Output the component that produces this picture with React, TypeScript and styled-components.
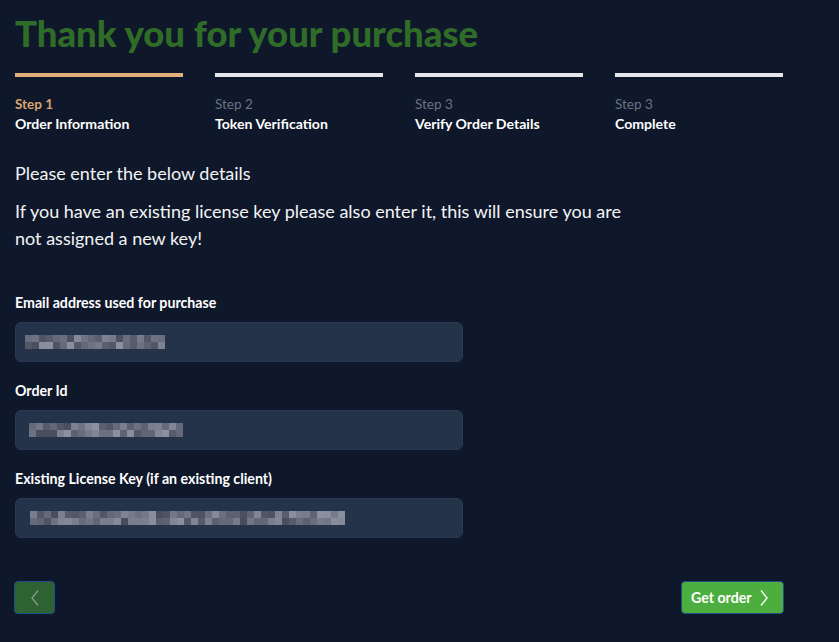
import styled, { createGlobalStyle } from 'styled-components';

const GlobalStyle = createGlobalStyle`
  html, body {
    margin: 0;
    padding: 0;
    background: #0f172a;
  }
  body {
    font-family: Lato, 'Open Sans', sans-serif;
    color: #ffffff;
  }
`;

const steps = [
  { step: 'Step 1', title: 'Order Information', active: true },
  { step: 'Step 2', title: 'Token Verification', active: false },
  { step: 'Step 3', title: 'Verify Order Details', active: false },
  { step: 'Step 3', title: 'Complete', active: false },
];

// grey levels for the pixelated (redacted) field values, two rows each
const mosaic = (seed: number, cols: number) => {
  const rows: number[][] = [[], []];
  let s = seed;
  for (let r = 0; r < 2; r++) {
    for (let c = 0; c < cols; c++) {
      s = (s * 9301 + 49297) % 233280;
      rows[r].push(s / 233280);
    }
  }
  return rows;
};

const Redacted = ({ seed, cols }: { seed: number; cols: number }) => {
  const rows = mosaic(seed, cols);
  const w = 7;
  return (
    <svg width={cols * w} height={14} viewBox={`0 0 ${cols * w} 14`}>
      {rows.map((row, r) =>
        row.map((v, c) => {
          const g = Math.round(70 + v * 70);
          return (
            <rect
              key={`${r}-${c}`}
              x={c * w}
              y={r * 7}
              width={w}
              height={7}
              fill={`rgb(${g}, ${g + 6}, ${g + 22})`}
            />
          );
        })
      )}
    </svg>
  );
};

const ChevronLeft = () => (
  <svg width="10" height="18" viewBox="0 0 10 18" fill="none">
    <path d="M8 1.5 L2 9 L8 16.5" stroke="#8a9a8c" strokeWidth="1.3" />
  </svg>
);

const ChevronRight = () => (
  <svg width="10" height="18" viewBox="0 0 10 18" fill="none">
    <path d="M2 1.5 L8 9 L2 16.5" stroke="#ffffff" strokeWidth="1.4" />
  </svg>
);

export default function App() {
  return (
    <>
      <GlobalStyle />
      <Page>
        <Title>Thank you for your purchase</Title>

        <Steps>
          {steps.map((s, i) => (
            <StepItem key={i}>
              <StepBar $active={s.active} />
              <StepLabel $active={s.active}>{s.step}</StepLabel>
              <StepTitle>{s.title}</StepTitle>
            </StepItem>
          ))}
        </Steps>

        <Intro>
          <Lead>Please enter the below details</Lead>
          <Lead>
            If you have an existing license key please also enter it, this will ensure you are
            not assigned a new key!
          </Lead>
        </Intro>

        <Form>
          <Field>
            <Label>Email address used for purchase</Label>
            <InputBox $pad={9}>
              <Redacted seed={7} cols={20} />
            </InputBox>
          </Field>
          <Field>
            <Label>Order Id</Label>
            <InputBox $pad={13}>
              <Redacted seed={31} cols={22} />
            </InputBox>
          </Field>
          <Field>
            <Label>Existing License Key (if an existing client)</Label>
            <InputBox $pad={14}>
              <Redacted seed={113} cols={45} />
            </InputBox>
          </Field>
        </Form>

        <Footer>
          <BackButton type="button" aria-label="Back">
            <ChevronLeft />
          </BackButton>
          <NextButton type="button">
            Get order
            <ChevronRight />
          </NextButton>
        </Footer>
      </Page>
    </>
  );
}

const Page = styled.div`
  width: 839px;
  height: 642px;
  box-sizing: border-box;
  padding: 10px 15px 0 15px;
  background: #0f172a;
  overflow: hidden;
`;

const Title = styled.h1`
  margin: 0;
  font-size: 36.5px;
  line-height: 46px;
  font-weight: 900;
  letter-spacing: 0;
  color: #2f6c28;
`;

const Steps = styled.div`
  display: grid;
  grid-template-columns: repeat(4, 168px);
  column-gap: 32px;
  margin-top: 17px;
`;

const StepItem = styled.div`
  display: flex;
  flex-direction: column;
`;

const StepBar = styled.div<{ $active: boolean }>`
  height: 4px;
  background: ${({ $active }) => ($active ? '#e1b07c' : '#e5e7eb')};
  margin-bottom: 17px;
`;

const StepLabel = styled.div<{ $active: boolean }>`
  font-size: 13.5px;
  line-height: 20px;
  font-weight: ${({ $active }) => ($active ? 700 : 400)};
  color: ${({ $active }) => ($active ? '#d9a56f' : '#6b7280')};
`;

const StepTitle = styled.div`
  font-size: 14.1px;
  line-height: 20px;
  font-weight: 700;
  color: #ffffff;
`;

const Intro = styled.div`
  margin-top: 26px;
  width: 632px;
`;

const Lead = styled.p`
  margin: 0 0 11px 0;
  font-size: 18px;
  line-height: 27px;
  font-weight: 400;
  color: #f3f4f6;
`;

const Form = styled.div`
  margin-top: 43px;
  width: 448px;
  display: flex;
  flex-direction: column;
  gap: 21px;
`;

const Field = styled.div`
  display: flex;
  flex-direction: column;
  gap: 11px;
`;

const Label = styled.label`
  font-size: 14.2px;
  line-height: 16px;
  font-weight: 700;
  color: #ffffff;
`;

const InputBox = styled.div<{ $pad: number }>`
  height: 40px;
  box-sizing: border-box;
  border: 1px solid #2b3952;
  border-radius: 6px;
  background: #24324a;
  display: flex;
  align-items: center;
  padding-left: ${({ $pad }) => $pad}px;
`;

const Footer = styled.div`
  margin-top: 43px;
  width: 769px;
  display: flex;
  justify-content: space-between;
  align-items: center;
`;

const BaseButton = styled.button`
  height: 33px;
  box-sizing: border-box;
  border: 1px solid #1f4e8a;
  border-radius: 4px;
  display: flex;
  align-items: center;
  cursor: pointer;
  font-family: inherit;
`;

const BackButton = styled(BaseButton)`
  width: 41px;
  margin-left: -1px;
  justify-content: center;
  background: #2e6233;
`;

const NextButton = styled(BaseButton)`
  width: 103px;
  gap: 7px;
  justify-content: flex-start;
  background: #4cae3f;
  color: #ffffff;
  font-size: 14.2px;
  font-weight: 700;
  padding: 0 0 0 9px;
`;
